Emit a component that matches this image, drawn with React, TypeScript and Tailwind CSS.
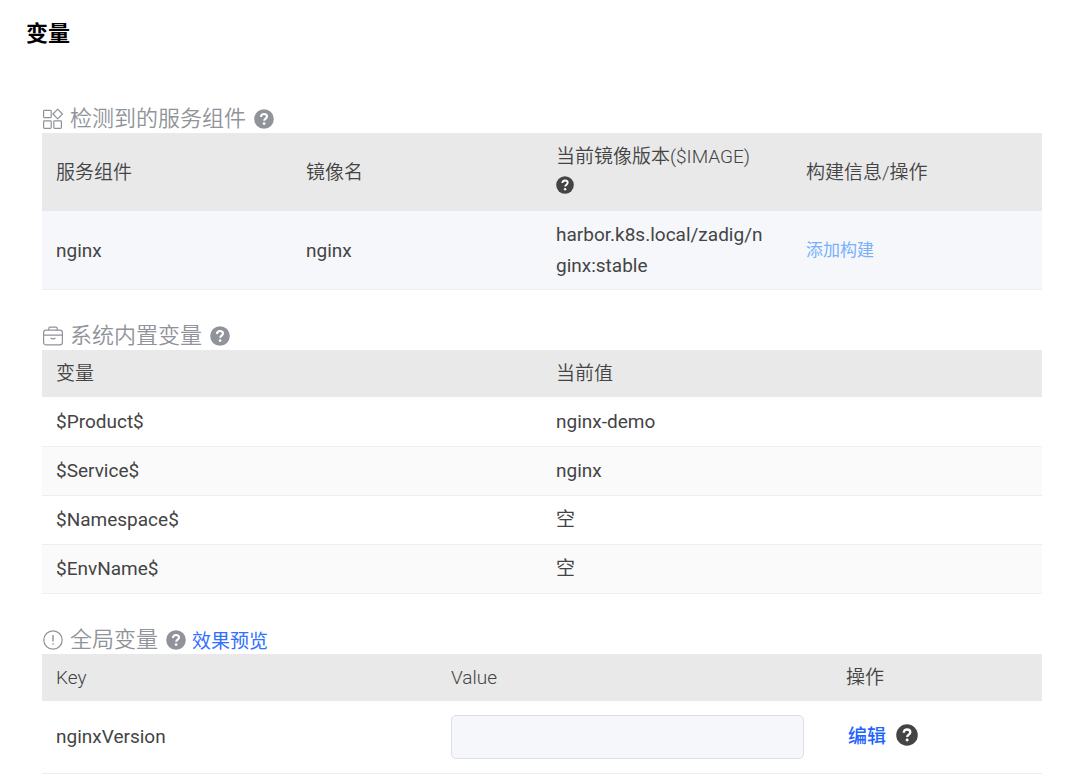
import type { ReactNode } from "react";

const components = [
  { name: "nginx", image: "nginx", version: "harbor.k8s.local/zadig/nginx:stable" },
];

const builtinVars = [
  { key: "$Product$", value: "nginx-demo" },
  { key: "$Service$", value: "nginx" },
  { key: "$Namespace$", value: "空" },
  { key: "$EnvName$", value: "空" },
];

function HelpIcon({ className }: { className: string }) {
  return (
    <svg viewBox="0 0 20 20" className={className} aria-hidden="true">
      <circle cx="10" cy="10" r="9.8" fill="currentColor" />
      <path d="M7 7.9c0-1.8 1.2-2.9 3-2.9s3 1 3 2.6c0 2.1-2.8 2.1-2.8 4.2" fill="none" stroke="white" strokeWidth="2.1" />
      <circle cx="10.1" cy="14.6" r="1.35" fill="white" />
    </svg>
  );
}

function ComponentsIcon() {
  return (
    <svg viewBox="0 0 22 22" className="size-[22px]" fill="none" stroke="currentColor" strokeWidth="1.2" aria-hidden="true">
      <rect x="1.6" y="2.4" width="7.6" height="7.2" rx="0.8" />
      <rect x="1.6" y="12.8" width="7.6" height="7.6" rx="0.8" />
      <rect x="11.8" y="12.8" width="7.6" height="7.6" rx="0.8" />
      <path d="M15.7 1.2l4.7 4.8-4.7 4.8L11 6z" strokeLinejoin="round" />
    </svg>
  );
}

function SuitcaseIcon() {
  return (
    <svg viewBox="0 0 22 22" className="size-[22px]" fill="none" stroke="currentColor" strokeWidth="1.2" aria-hidden="true">
      <rect x="1.6" y="5.2" width="18.8" height="14.6" rx="2.4" />
      <path d="M6.8 5.2V3.4c0-.8.5-1.3 1.3-1.3h5.8c.8 0 1.3.5 1.3 1.3v1.8M1.6 10.2h18.8M8.6 12.8c1 1.3 3.8 1.3 4.8 0" />
    </svg>
  );
}

function WarningIcon() {
  return (
    <svg viewBox="0 0 22 22" className="size-[22px]" fill="none" stroke="currentColor" strokeWidth="1.2" aria-hidden="true">
      <circle cx="11" cy="11" r="9.2" />
      <path d="M11 6v6.4M11 14.2v1.6" strokeWidth="1.4" />
    </svg>
  );
}

function SectionTitle({ icon, title, children }: { icon: ReactNode; title: string; children?: ReactNode }) {
  return (
    <div className="flex h-7 items-center text-[#909399]">
      {icon}
      <h2 className="mr-2 ml-[6px] text-[22px] leading-7 font-[350]">{title}</h2>
      <button type="button" aria-label={`${title}说明`}>
        <HelpIcon className="size-5" />
      </button>
      {children}
    </div>
  );
}

function Th({ children, className = "" }: { children: ReactNode; className?: string }) {
  return (
    <th scope="col" className={`px-[14px] py-2 text-left font-[350] ${className}`}>
      {children}
    </th>
  );
}

const tableClass = "w-full table-fixed border-collapse text-[19px] leading-[31px] text-[#444]";

export default function App() {
  return (
    <main className="bg-white px-[26px] pt-5 font-[Roboto,'Noto_Sans_CJK_SC',sans-serif]">
      <h1 className="text-[22px] leading-7 font-bold text-black">变量</h1>

      <div className="mt-[57px] mr-3 ml-4 flex flex-col gap-8">
        <section>
          <SectionTitle icon={<ComponentsIcon />} title="检测到的服务组件" />
          <table className={tableClass}>
            <thead className="bg-[#e9e9e9]">
              <tr>
                <Th>服务组件</Th>
                <Th>镜像名</Th>
                <Th>
                  当前镜像版本($IMAGE)
                  <button type="button" aria-label="镜像版本说明" className="flex h-[31px] items-start pt-1">
                    <HelpIcon className="size-[18px] text-[#444]" />
                  </button>
                </Th>
                <Th>构建信息/操作</Th>
              </tr>
            </thead>
            <tbody>
              {components.map((item) => (
                <tr key={item.name} className="border-b border-[#ebeef5] bg-[#f5f7fb]">
                  <td className="px-[14px] py-2">{item.name}</td>
                  <td className="px-[14px] py-2">{item.image}</td>
                  <td className="py-2 pr-6 pl-[14px] break-all">{item.version}</td>
                  <td className="px-[14px] py-2">
                    <a href="#build" className="text-[17px] text-[#79b0fb]">添加构建</a>
                  </td>
                </tr>
              ))}
            </tbody>
          </table>
        </section>

        <section>
          <SectionTitle icon={<SuitcaseIcon />} title="系统内置变量" />
          <table className={tableClass}>
            <thead className="bg-[#e9e9e9]">
              <tr>
                <Th>变量</Th>
                <Th>当前值</Th>
              </tr>
            </thead>
            <tbody>
              {builtinVars.map((item) => (
                <tr key={item.key} className="h-[49px] border-b border-[#ebeef5] even:bg-[#fafafa]">
                  <td className="px-[14px] py-2">{item.key}</td>
                  <td className="px-[14px] py-2">{item.value}</td>
                </tr>
              ))}
            </tbody>
          </table>
        </section>

        <section>
          <SectionTitle icon={<WarningIcon />} title="全局变量">
            <a href="#preview" className="ml-[6px] pt-1 text-[19px] leading-7 text-[#3270ff]">效果预览</a>
          </SectionTitle>
          <table className={tableClass}>
            <thead className="bg-[#e9e9e9]">
              <tr>
                <Th className="w-[39.5%]">Key</Th>
                <Th className="w-[39.5%]">Value</Th>
                <Th>操作</Th>
              </tr>
            </thead>
            <tbody>
              <tr className="border-b border-[#ebeef5]">
                <td className="px-[14px] py-[14px]">
                  <label htmlFor="nginxVersion">nginxVersion</label>
                </td>
                <td className="py-[14px] pr-7 pl-[14px]">
                  <input
                    id="nginxVersion"
                    type="text"
                    className="block h-11 w-full rounded-[5px] border border-[#dcdfe6] bg-[#f5f7fb] px-3 outline-none"
                  />
                </td>
                <td className="px-4 py-[14px]">
                  <div className="flex items-center gap-[10px]">
                    <button type="button" className="font-medium text-[#1f63ff]">编辑</button>
                    <button type="button" aria-label="变量说明" className="pb-1">
                      <HelpIcon className="size-[22px] text-[#444]" />
                    </button>
                  </div>
                </td>
              </tr>
            </tbody>
          </table>
        </section>
      </div>
    </main>
  );
}
